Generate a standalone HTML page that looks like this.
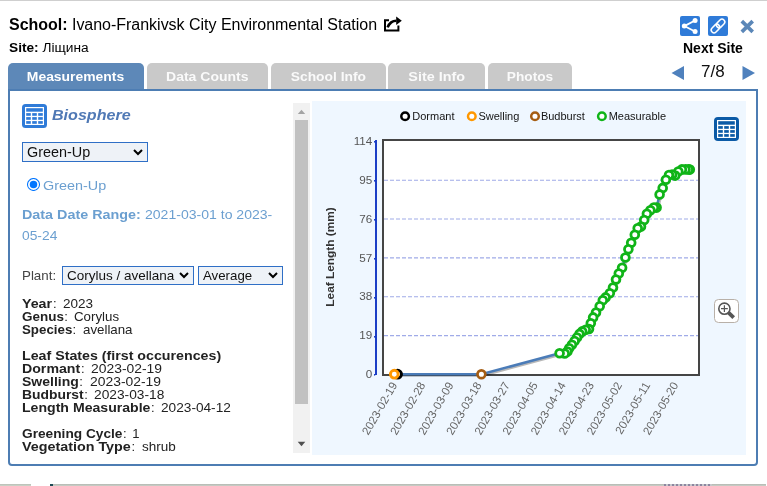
<!DOCTYPE html>
<html>
<head>
<meta charset="utf-8">
<title>Site popup</title>
<style>
*{box-sizing:border-box;margin:0;padding:0}
html,body{width:767px;height:486px;overflow:hidden;background:#fff}
body{position:relative;font-family:"Liberation Sans",sans-serif;color:#000}
#wrap{position:absolute;left:0;top:0;width:767px;height:486px;will-change:transform;transform:translateZ(0)}
.abs{position:absolute;white-space:nowrap}
#topline{left:0;top:0;width:767px;height:1px;background:#cfcfcf}
#title{left:9px;top:15px;font-size:16px;line-height:20px;letter-spacing:-.02px}
#site{left:9px;top:39px;font-size:13.7px;line-height:18px}
/* tabs */
.tab{position:absolute;top:63px;height:26px;border-radius:5px 5px 0 0;background:#c9c9c9;color:#fafafa;
 font-weight:bold;font-size:13px;letter-spacing:.6px;line-height:28px;text-align:center;white-space:nowrap}
.tab.on{background:#5d88b8;color:#fff;height:27px}
/* panel */
#panel{left:8px;top:89px;width:750px;height:377px;border:2px solid #4d7db3;border-radius:0 0 4px 4px;background:#fff}
#chartbg{left:312px;top:101px;width:434px;height:354px;background:#eff7ff}
/* scrollbar */
#sbtrack{left:293px;top:103px;width:17px;height:350px;background:#f1f1f1}
#sbthumb{left:295px;top:120px;width:13px;height:284px;background:#c1c1c1}
/* left text */
.t{position:absolute;left:22px;white-space:nowrap;font-size:13px;line-height:13px;color:#222;letter-spacing:.27px}
.t b{letter-spacing:.6px}
.lb{color:#6b9fd0}
.sel{position:absolute;height:19px;border:1px solid #2f6fc6;background:#eef2f7;color:#111;font-size:13px;letter-spacing:.27px;line-height:17px;padding-left:4px;white-space:nowrap;overflow:hidden}
.sel svg{position:absolute;top:4.8px}
</style>
</head>
<body>
<div id="wrap">
<div id="topline" class="abs"></div>
<div id="strip1" class="abs" style="left:0;top:484px;width:31px;height:2px;background:linear-gradient(#b9beb6,#cdd6ca)"></div>
<div id="strip2" class="abs" style="left:50px;top:484px;width:716px;height:2px;background:linear-gradient(#b4b8b2,#cbd0c8)"></div>
<div class="abs" style="left:50px;top:484px;width:3px;height:2px;background:#1d4a55"></div>
<div class="abs" style="left:664px;top:484px;width:48px;height:2px;background:repeating-linear-gradient(90deg,#8d86a0 0 2px,#c6c8cc 2px 4px)"></div>

<div id="title" class="abs"><b>School:</b> Ivano-Frankivsk City Environmental Station</div>
<div id="site" class="abs"><b>Site:</b> Ліщина</div>

<!-- external-link icon after title -->
<svg class="abs" style="left:383px;top:15px" width="20" height="18" viewBox="0 0 20 18">
  <path d="M6 5.3 H2 V15.4 H15.4 V10.5" fill="none" stroke="#000" stroke-width="2" stroke-linejoin="miter"/>
  <path d="M4.6 12.4 C5.4 10.2 6.6 8.6 8.2 7.4 C9.8 6.2 11.6 5.8 13.4 5.8" fill="none" stroke="#000" stroke-width="2.6"/>
  <path d="M13.2 1.6 L18.8 5.8 L13.2 10 Z" fill="#000"/>
</svg>

<!-- top-right buttons -->
<svg class="abs" style="left:680px;top:16px" width="20" height="20" viewBox="0 0 20 20">
  <rect width="20" height="20" rx="2" fill="#2f7bd8"/>
  <path d="M15 4.5 L4.4 10.1 L15 15.5" fill="none" stroke="#fff" stroke-width="1.8"/>
  <circle cx="15.1" cy="4.5" r="2.5" fill="#fff"/><circle cx="4.3" cy="10.1" r="2.5" fill="#fff"/><circle cx="15.1" cy="15.5" r="2.5" fill="#fff"/>
</svg>
<svg class="abs" style="left:708px;top:16px" width="20" height="20" viewBox="0 0 20 20">
  <rect width="20" height="20" rx="2" fill="#2f7bd8"/>
  <g transform="rotate(-45 10 10)" fill="none" stroke="#fff" stroke-width="1.5">
    <rect x="1.6" y="7.2" width="9.6" height="5.6" rx="2.8"/>
    <rect x="8.8" y="7.2" width="9.6" height="5.6" rx="2.8"/>
  </g>
</svg>
<svg class="abs" style="left:740px;top:19px" width="15" height="15" viewBox="0 0 15 15">
  <path d="M1.8 2.2 L12.7 12.8 M12.7 2.2 L1.8 12.8" stroke="#5b87b8" stroke-width="3.7" stroke-linecap="butt"/>
</svg>
<div class="abs" id="nexts" style="left:683px;top:39px;font-size:14px;font-weight:bold;line-height:18px">Next Site</div>
<svg class="abs" style="left:671px;top:66px" width="14" height="14" viewBox="0 0 14 14"><path d="M13 0 L13 14 L0.5 7 Z" fill="#4f81bd"/></svg>
<div class="abs" id="pg" style="left:701px;top:62px;font-size:17px;line-height:20px;color:#111">7/8</div>
<svg class="abs" style="left:742px;top:66px" width="14" height="14" viewBox="0 0 14 14"><path d="M0.5 0 L0.5 14 L13 7 Z" fill="#4f81bd"/></svg>

<!-- tabs -->
<div class="tab on" style="left:8px;width:136px"><i style="display:inline-block;font-style:normal;letter-spacing:0;transform:scaleX(1.0701);transform-origin:50% 50%">Measurements</i></div>
<div class="tab" style="left:147px;width:121px"><i style="display:inline-block;font-style:normal;letter-spacing:0;transform:scaleX(1.0771);transform-origin:50% 50%">Data Counts</i></div>
<div class="tab" style="left:271px;width:115px"><i style="display:inline-block;font-style:normal;letter-spacing:0;transform:scaleX(1.0622);transform-origin:50% 50%">School Info</i></div>
<div class="tab" style="left:388px;width:97px"><i style="display:inline-block;font-style:normal;letter-spacing:0;transform:scaleX(1.1046);transform-origin:50% 50%">Site Info</i></div>
<div class="tab" style="left:488px;width:84px"><i style="display:inline-block;font-style:normal;letter-spacing:0;transform:scaleX(1.0511);transform-origin:50% 50%">Photos</i></div>

<div id="panel" class="abs"></div>
<div id="chartbg" class="abs"></div>
<div id="sbtrack" class="abs"></div>
<div id="sbthumb" class="abs"></div>
<svg class="abs" style="left:293px;top:103px" width="17" height="350" viewBox="0 0 17 350">
  <path d="M4.8 11 L8.5 6.8 L12.2 11 Z" fill="#a3a3a3"/>
  <path d="M4.7 338.8 L12.3 338.8 L8.5 343.2 Z" fill="#505050"/>
</svg>

<!-- biosphere icon -->
<svg class="abs" style="left:22px;top:104px" width="25" height="24" viewBox="0 0 25 24">
  <rect x="0" y="0" width="25" height="24" rx="3.5" fill="#2f7bd8"/>
  <rect x="3" y="3" width="19" height="18" fill="#fff"/>
  <g fill="#2f7bd8">
    <rect x="4.2" y="4.2" width="16.6" height="3.5"/>
    <rect x="4.2" y="9.1" width="4.6" height="2.7"/><rect x="10.2" y="9.1" width="4.6" height="2.7"/><rect x="16.2" y="9.1" width="4.6" height="2.7"/>
    <rect x="4.2" y="13.1" width="4.6" height="2.7"/><rect x="10.2" y="13.1" width="4.6" height="2.7"/><rect x="16.2" y="13.1" width="4.6" height="2.7"/>
    <rect x="4.2" y="17.1" width="4.6" height="2.7"/><rect x="10.2" y="17.1" width="4.6" height="2.7"/><rect x="16.2" y="17.1" width="4.6" height="2.7"/>
  </g>
</svg>
<div class="abs" id="bio" style="left:52px;top:105px;font-size:15px;line-height:20px;font-weight:bold;font-style:italic;color:#5079b5;transform:scaleX(1.072);transform-origin:0 50%">Biosphere</div>

<!-- protocol select -->
<div class="sel" style="left:22px;top:142px;width:126px;height:20px;font-size:14px;letter-spacing:0;line-height:18px;padding-left:3.8px"><i style="display:inline-block;font-style:normal;transform:scaleX(1.028);transform-origin:0 50%">Green-Up</i>
  <svg style="left:110px;top:6px" width="10" height="7" viewBox="0 0 10 7"><path d="M1 1 L5 5 L9 1" fill="none" stroke="#000" stroke-width="2"/></svg>
</div>

<!-- radio -->
<svg class="abs" style="left:27px;top:178px" width="13" height="13" viewBox="0 0 13 13">
  <circle cx="6.5" cy="6.5" r="6" fill="#fff" stroke="#0075ff" stroke-width="1.05"/>
  <circle cx="6.5" cy="6.5" r="3.75" fill="#0075ff"/>
</svg>
<div class="abs lb" id="gu" style="left:43px;top:177px;font-size:13.6px;line-height:18px;transform:scaleX(1.058);transform-origin:0 50%">Green-Up</div>

<div class="t lb" id="ddr" style="top:204px;line-height:21px"><b style="display:inline-block;transform:scaleX(1.1038);transform-origin:0 50%;margin-right:11.92px;letter-spacing:0;word-spacing:0">Data Date Range:</b><span style="letter-spacing:0.60px;word-spacing:-0.7px"> </span><span style="display:inline-block;transform:scaleX(1.0804);transform-origin:0 50%;margin-right:10.08px;letter-spacing:0;word-spacing:0">2021-03-01 to 2023-</span><br><span style="display:inline-block;transform:scaleX(1.0631);transform-origin:0 50%;margin-right:2.62px;letter-spacing:0;word-spacing:0">05-24</span></div>

<div class="t" id="plant" style="top:269px;color:#444"><span style="display:inline-block;transform:scaleX(1.0258);transform-origin:0 50%;margin-right:1.03px;letter-spacing:0;word-spacing:0">Plant:</span></div>
<div class="sel" style="left:62px;top:266px;width:132px;letter-spacing:0"><i style="display:inline-block;font-style:normal;transform:scaleX(1.038);transform-origin:0 50%">Corylus / avellana</i>
  <svg style="left:115.8px" width="10" height="7" viewBox="0 0 10 7"><path d="M1 1 L5 5 L9 1" fill="none" stroke="#000" stroke-width="2"/></svg>
</div>
<div class="sel" style="left:198px;top:266px;width:85px;letter-spacing:0"><i style="display:inline-block;font-style:normal;transform:scaleX(1.02);transform-origin:0 50%">Average</i>
  <svg style="left:69px" width="10" height="7" viewBox="0 0 10 7"><path d="M1 1 L5 5 L9 1" fill="none" stroke="#000" stroke-width="2"/></svg>
</div>

<div class="t" id="info" style="top:297px"><b style="display:inline-block;transform:scaleX(1.0946);transform-origin:0 50%;margin-right:3.47px;letter-spacing:0;word-spacing:0">Year</b><span style="letter-spacing:0.38px;word-spacing:1.8px">: </span><span style="display:inline-block;transform:scaleX(1.0391);transform-origin:0 50%;margin-right:1.51px;letter-spacing:0;word-spacing:0">2023</span><br><b style="display:inline-block;transform:scaleX(1.0349);transform-origin:0 50%;margin-right:1.77px;letter-spacing:0;word-spacing:0">Genus</b><span style="letter-spacing:0.17px;word-spacing:1.9px">: </span><span style="display:inline-block;transform:scaleX(1.0229);transform-origin:0 50%;margin-right:1.18px;letter-spacing:0;word-spacing:0">Corylus</span><br><b style="display:inline-block;transform:scaleX(1.0230);transform-origin:0 50%;margin-right:1.32px;letter-spacing:0;word-spacing:0">Species</b><span style="letter-spacing:0.15px;word-spacing:3.0px">: </span><span style="display:inline-block;transform:scaleX(1.0221);transform-origin:0 50%;margin-right:1.23px;letter-spacing:0;word-spacing:0">avellana</span><br><br><b style="display:inline-block;transform:scaleX(1.0938);transform-origin:0 50%;margin-right:17.67px;letter-spacing:0;word-spacing:0">Leaf States (first occurences)</b><br><b style="display:inline-block;transform:scaleX(1.0892);transform-origin:0 50%;margin-right:5.56px;letter-spacing:0;word-spacing:0">Dormant</b><span style="letter-spacing:0.50px;word-spacing:2.0px">: </span><span style="display:inline-block;transform:scaleX(1.0682);transform-origin:0 50%;margin-right:5.04px;letter-spacing:0;word-spacing:0">2023-02-19</span><br><b style="display:inline-block;transform:scaleX(1.0768);transform-origin:0 50%;margin-right:4.62px;letter-spacing:0;word-spacing:0">Swelling</b><span style="letter-spacing:0.50px;word-spacing:2.0px">: </span><span style="display:inline-block;transform:scaleX(1.0682);transform-origin:0 50%;margin-right:5.04px;letter-spacing:0;word-spacing:0">2023-02-19</span><br><b style="display:inline-block;transform:scaleX(1.0675);transform-origin:0 50%;margin-right:4.45px;letter-spacing:0;word-spacing:0">Budburst</b><span style="letter-spacing:0.42px;word-spacing:2.2px">: </span><span style="display:inline-block;transform:scaleX(1.0574);transform-origin:0 50%;margin-right:4.24px;letter-spacing:0;word-spacing:0">2023-03-18</span><br><b style="display:inline-block;transform:scaleX(1.0843);transform-origin:0 50%;margin-right:10.60px;letter-spacing:0;word-spacing:0">Length Measurable</b><span style="letter-spacing:0.37px;word-spacing:2.0px">: </span><span style="display:inline-block;transform:scaleX(1.0506);transform-origin:0 50%;margin-right:3.74px;letter-spacing:0;word-spacing:0">2023-04-12</span><br><br><b style="display:inline-block;transform:scaleX(1.0537);transform-origin:0 50%;margin-right:5.52px;letter-spacing:0;word-spacing:0">Greening Cycle</b><span style="letter-spacing:0.35px;word-spacing:1.3px">: </span><span style="display:inline-block;transform:scaleX(1.0000);transform-origin:0 50%;margin-right:0.35px;letter-spacing:0;word-spacing:0">1</span><br><b style="display:inline-block;transform:scaleX(1.1016);transform-origin:0 50%;margin-right:10.75px;letter-spacing:0;word-spacing:0">Vegetation Type</b><span style="letter-spacing:0.31px;word-spacing:2.2px">: </span><span style="display:inline-block;transform:scaleX(1.0376);transform-origin:0 50%;margin-right:1.53px;letter-spacing:0;word-spacing:0">shrub</span></div>

<!--CHART-->
<svg class="abs" id="chart" style="left:312px;top:101px" width="434" height="354" viewBox="312 101 434 354" font-family="Liberation Sans, sans-serif">
<rect x="383" y="140" width="316" height="235" fill="#fff" stroke="#454545" stroke-width="2"/>
<line x1="384" x2="698" y1="180.2" y2="180.2" stroke="#a0abe8" stroke-width="1.1" stroke-dasharray="4 2"/>
<line x1="384" x2="698" y1="219.05" y2="219.05" stroke="#a0abe8" stroke-width="1.1" stroke-dasharray="4 2"/>
<line x1="384" x2="698" y1="257.9" y2="257.9" stroke="#a0abe8" stroke-width="1.1" stroke-dasharray="4 2"/>
<line x1="384" x2="698" y1="296.75" y2="296.75" stroke="#a0abe8" stroke-width="1.1" stroke-dasharray="4 2"/>
<line x1="384" x2="698" y1="335.6" y2="335.6" stroke="#a0abe8" stroke-width="1.1" stroke-dasharray="4 2"/>
<rect x="375" y="140" width="2" height="235" fill="#1b3ec6"/>
<rect x="374" y="141" width="1.2" height="1.6" fill="#1b3ec6"/>
<rect x="374" y="180" width="1.2" height="1.6" fill="#1b3ec6"/>
<rect x="374" y="219" width="1.2" height="1.6" fill="#1b3ec6"/>
<rect x="374" y="258" width="1.2" height="1.6" fill="#1b3ec6"/>
<rect x="374" y="297" width="1.2" height="1.6" fill="#1b3ec6"/>
<rect x="374" y="336" width="1.2" height="1.6" fill="#1b3ec6"/>
<rect x="374" y="374" width="1.2" height="1.6" fill="#1b3ec6"/>
<text transform="translate(372.3 144.8) scale(1.17 1)" text-anchor="end" font-size="10" fill="#555">114</text>
<text transform="translate(372.3 183.8) scale(1.17 1)" text-anchor="end" font-size="10" fill="#555">95</text>
<text transform="translate(372.3 222.5) scale(1.17 1)" text-anchor="end" font-size="10" fill="#555">76</text>
<text transform="translate(372.3 261.9) scale(1.17 1)" text-anchor="end" font-size="10" fill="#555">57</text>
<text transform="translate(372.3 300.3) scale(1.17 1)" text-anchor="end" font-size="10" fill="#555">38</text>
<text transform="translate(372.3 339.1) scale(1.17 1)" text-anchor="end" font-size="10" fill="#555">19</text>
<text transform="translate(372.3 377.9) scale(1.17 1)" text-anchor="end" font-size="10" fill="#555">0</text>
<text transform="translate(334 257) rotate(-90) scale(1.13 1)" text-anchor="middle" font-size="10.5" font-weight="bold" fill="#333">Leaf Length (mm)</text>
<text transform="translate(397.7 384.9) rotate(-60)" text-anchor="end" font-size="11.5" fill="#666">2023-02-19</text>
<text transform="translate(425.8 384.9) rotate(-60)" text-anchor="end" font-size="11.5" fill="#666">2023-02-28</text>
<text transform="translate(453.9 384.9) rotate(-60)" text-anchor="end" font-size="11.5" fill="#666">2023-03-09</text>
<text transform="translate(482.0 384.9) rotate(-60)" text-anchor="end" font-size="11.5" fill="#666">2023-03-18</text>
<text transform="translate(510.1 384.9) rotate(-60)" text-anchor="end" font-size="11.5" fill="#666">2023-03-27</text>
<text transform="translate(538.2 384.9) rotate(-60)" text-anchor="end" font-size="11.5" fill="#666">2023-04-05</text>
<text transform="translate(566.3 384.9) rotate(-60)" text-anchor="end" font-size="11.5" fill="#666">2023-04-14</text>
<text transform="translate(594.4 384.9) rotate(-60)" text-anchor="end" font-size="11.5" fill="#666">2023-04-23</text>
<text transform="translate(622.5 384.9) rotate(-60)" text-anchor="end" font-size="11.5" fill="#666">2023-05-02</text>
<text transform="translate(650.6 384.9) rotate(-60)" text-anchor="end" font-size="11.5" fill="#666">2023-05-11</text>
<text transform="translate(678.7 384.9) rotate(-60)" text-anchor="end" font-size="11.5" fill="#666">2023-05-20</text>
<circle cx="405.1" cy="116.2" r="3.8" fill="#fff" stroke="#000" stroke-width="2.5"/>
<text x="412.3" y="120.1" font-size="11" fill="#151515">Dormant</text>
<circle cx="471.8" cy="116.2" r="3.8" fill="#fff" stroke="#ff9800" stroke-width="2.5"/>
<text x="478.4" y="120.1" font-size="11" fill="#151515">Swelling</text>
<circle cx="535" cy="116.2" r="3.8" fill="#fff" stroke="#a55d12" stroke-width="2.5"/>
<text x="540.9" y="120.1" font-size="11" fill="#151515">Budburst</text>
<circle cx="601.9" cy="116.2" r="3.8" fill="#fff" stroke="#10b418" stroke-width="2.5"/>
<text x="608.7" y="120.1" font-size="11" fill="#151515">Measurable</text>
<path d="M394.3 374.2 L397.6 374.2 L481.4 374.2 L559.6 353.3 L564.7 353.5 L567.4 351.6 L569.2 348.3 L571.9 344.8 L574.6 341.1 L577.0 337.6 L579.5 333.9 L582.2 331.4 L585.7 329.8 L589.0 329.0 L590.8 323.2 L593.1 317.4 L596.0 312.5 L599.7 306.3 L602.8 300.2 L605.6 297.4 L609.8 293.3 L613.0 287.5 L616.0 279.6 L618.8 273.5 L622.1 267.7 L625.4 257.5 L628.4 249.3 L631.2 242.7 L634.8 234.8 L637.7 228.2 L641.0 226.6 L644.2 220.0 L646.9 213.8 L650.4 210.3 L653.9 207.6 L656.6 207.6 L659.6 194.4 L662.7 187.9 L665.9 179.7 L669.0 175.1 L672.1 174.5 L675.2 175.6 L678.3 171.5 L681.9 169.4 L685.5 169.4 L688.6 169.4 L689.8 169.6" transform="translate(1.4 1.4)" fill="none" stroke="#000" stroke-opacity=".28" stroke-width="2.4" stroke-linejoin="round"/>
<path d="M394.3 374.2 L397.6 374.2 L481.4 374.2 L559.6 353.3 L564.7 353.5 L567.4 351.6 L569.2 348.3 L571.9 344.8 L574.6 341.1 L577.0 337.6 L579.5 333.9 L582.2 331.4 L585.7 329.8 L589.0 329.0 L590.8 323.2 L593.1 317.4 L596.0 312.5 L599.7 306.3 L602.8 300.2 L605.6 297.4 L609.8 293.3 L613.0 287.5 L616.0 279.6 L618.8 273.5 L622.1 267.7 L625.4 257.5 L628.4 249.3 L631.2 242.7 L634.8 234.8 L637.7 228.2 L641.0 226.6 L644.2 220.0 L646.9 213.8 L650.4 210.3 L653.9 207.6 L656.6 207.6 L659.6 194.4 L662.7 187.9 L665.9 179.7 L669.0 175.1 L672.1 174.5 L675.2 175.6 L678.3 171.5 L681.9 169.4 L685.5 169.4 L688.6 169.4 L689.8 169.6" fill="none" stroke="#4b7cb8" stroke-width="2.5" stroke-linejoin="round"/>
<g fill="#fff" stroke="#10b418" stroke-width="2.8">
<circle cx="689.8" cy="169.6" r="3.9"/>
<circle cx="688.6" cy="169.4" r="3.9"/>
<circle cx="685.5" cy="169.4" r="3.9"/>
<circle cx="681.9" cy="169.4" r="3.9"/>
<circle cx="678.3" cy="171.5" r="3.9"/>
<circle cx="675.2" cy="175.6" r="3.9"/>
<circle cx="672.1" cy="174.5" r="3.9"/>
<circle cx="669.0" cy="175.1" r="3.9"/>
<circle cx="665.9" cy="179.7" r="3.9"/>
<circle cx="662.7" cy="187.9" r="3.9"/>
<circle cx="659.6" cy="194.4" r="3.9"/>
<circle cx="656.6" cy="207.6" r="3.9"/>
<circle cx="653.9" cy="207.6" r="3.9"/>
<circle cx="650.4" cy="210.3" r="3.9"/>
<circle cx="646.9" cy="213.8" r="3.9"/>
<circle cx="644.2" cy="220.0" r="3.9"/>
<circle cx="641.0" cy="226.6" r="3.9"/>
<circle cx="637.7" cy="228.2" r="3.9"/>
<circle cx="634.8" cy="234.8" r="3.9"/>
<circle cx="631.2" cy="242.7" r="3.9"/>
<circle cx="628.4" cy="249.3" r="3.9"/>
<circle cx="625.4" cy="257.5" r="3.9"/>
<circle cx="622.1" cy="267.7" r="3.9"/>
<circle cx="618.8" cy="273.5" r="3.9"/>
<circle cx="616.0" cy="279.6" r="3.9"/>
<circle cx="613.0" cy="287.5" r="3.9"/>
<circle cx="609.8" cy="293.3" r="3.9"/>
<circle cx="605.6" cy="297.4" r="3.9"/>
<circle cx="602.8" cy="300.2" r="3.9"/>
<circle cx="599.7" cy="306.3" r="3.9"/>
<circle cx="596.0" cy="312.5" r="3.9"/>
<circle cx="593.1" cy="317.4" r="3.9"/>
<circle cx="590.8" cy="323.2" r="3.9"/>
<circle cx="589.0" cy="329.0" r="3.9"/>
<circle cx="585.7" cy="329.8" r="3.9"/>
<circle cx="582.2" cy="331.4" r="3.9"/>
<circle cx="579.5" cy="333.9" r="3.9"/>
<circle cx="577.0" cy="337.6" r="3.9"/>
<circle cx="574.6" cy="341.1" r="3.9"/>
<circle cx="571.9" cy="344.8" r="3.9"/>
<circle cx="569.2" cy="348.3" r="3.9"/>
<circle cx="567.4" cy="351.6" r="3.9"/>
<circle cx="564.7" cy="353.5" r="3.9"/>
<circle cx="559.6" cy="353.3" r="3.9"/>
</g>
<circle cx="481.4" cy="374.2" r="3.9" fill="#fff" stroke="#a55d12" stroke-width="2.7"/>
<circle cx="397.6" cy="374.2" r="3.9" fill="#fff" stroke="#000" stroke-width="2.9"/>
<circle cx="394.3" cy="374.2" r="3.9" fill="#fff" stroke="#ff9800" stroke-width="2.9"/>
<g transform="translate(714 117)"><rect width="25" height="24" rx="4" fill="#0b5aa6"/><rect x="3" y="3" width="19" height="18" fill="#fff"/><g fill="#0b5aa6"><rect x="4.2" y="4.2" width="16.6" height="3.5"/>
<rect x="4.2" y="9.1" width="4.6" height="2.7"/>
<rect x="10.2" y="9.1" width="4.6" height="2.7"/>
<rect x="16.2" y="9.1" width="4.6" height="2.7"/>
<rect x="4.2" y="13.1" width="4.6" height="2.7"/>
<rect x="10.2" y="13.1" width="4.6" height="2.7"/>
<rect x="16.2" y="13.1" width="4.6" height="2.7"/>
<rect x="4.2" y="17.1" width="4.6" height="2.7"/>
<rect x="10.2" y="17.1" width="4.6" height="2.7"/>
<rect x="16.2" y="17.1" width="4.6" height="2.7"/>
</g></g>
<g transform="translate(714 299)"><rect x=".5" y=".5" width="24" height="23" rx="4" fill="#fff" stroke="#b8b0a8"/><circle cx="10.4" cy="9.7" r="5.6" fill="none" stroke="#555" stroke-width="1.6"/><path d="M10.4 6.3 V13.1 M7 9.7 H13.8" stroke="#555" stroke-width="1.2"/><path d="M14.5 13.6 L19.7 18.6" stroke="#555" stroke-width="3.8"/></g>
</svg>
<!--/CHART-->
</div>
</body>
</html>
